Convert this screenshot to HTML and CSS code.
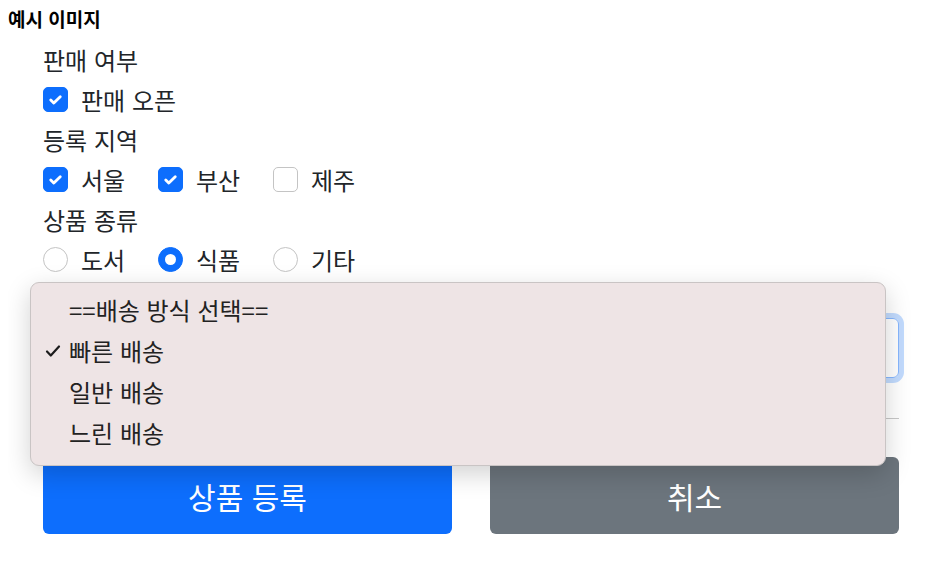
FILE: index.html
```html
<!DOCTYPE html>
<html lang="ko">
<head>
  <meta charset="UTF-8">
  <title>예시 이미지</title>
  <link rel="stylesheet" href="styles.css">
</head>
<body>

  <div class="title">예시 이미지</div>

  <form class="itemForm">
    <div class="row">
      <span class="formLabel">판매 여부</span>
    </div>
    <div class="row">
      <label class="check">
        <span class="box checked">
          <svg viewBox="0 0 20 20" width="19" height="19"><path d="M5 10.5l3.2 3.2L15 7" fill="none" stroke="#fff" stroke-width="3" stroke-linecap="round" stroke-linejoin="round"/></svg>
        </span>
        판매 오픈
      </label>
    </div>

    <div class="row">
      <span class="formLabel">등록 지역</span>
    </div>
    <div class="row">
      <label class="check">
        <span class="box checked">
          <svg viewBox="0 0 20 20" width="19" height="19"><path d="M5 10.5l3.2 3.2L15 7" fill="none" stroke="#fff" stroke-width="3" stroke-linecap="round" stroke-linejoin="round"/></svg>
        </span>
        서울
      </label>
      <label class="check">
        <span class="box checked">
          <svg viewBox="0 0 20 20" width="19" height="19"><path d="M5 10.5l3.2 3.2L15 7" fill="none" stroke="#fff" stroke-width="3" stroke-linecap="round" stroke-linejoin="round"/></svg>
        </span>
        부산
      </label>
      <label class="check">
        <span class="box"></span>
        제주
      </label>
    </div>

    <div class="row">
      <span class="formLabel">상품 종류</span>
    </div>
    <div class="row">
      <label class="check">
        <span class="box radio"></span>
        도서
      </label>
      <label class="check">
        <span class="box radio checked"><span class="dot"></span></span>
        식품
      </label>
      <label class="check">
        <span class="box radio"></span>
        기타
      </label>
    </div>

    <div class="selectWrap">
      <!-- select box; its value is hidden behind the open menu -->
      <div class="select"></div>

      <div class="dropMenu">
        <div class="option">==배송 방식 선택==</div>
        <div class="option">
          <svg class="tick" viewBox="0 0 16 16" width="16" height="16"><path d="M2 8.5l3.8 4L14 3.5" fill="none" stroke="#1c1c1c" stroke-width="2.2" stroke-linecap="round" stroke-linejoin="round"/></svg>
          빠른 배송
        </div>
        <div class="option">일반 배송</div>
        <div class="option">느린 배송</div>
      </div>
    </div>

    <hr class="divider">

    <div class="buttons">
      <button type="button" class="btn btnPrimary">상품 등록</button>
      <button type="button" class="btn btnSecondary">취소</button>
    </div>
  </form>

</body>
</html>
```

FILE: styles.css
```css
body {
  margin: 8px;
  font-family: "Noto Sans CJK KR", "Noto Sans", sans-serif;
  color: #212529;
  background: #fff;
}

.title {
  font-size: 19px;
  font-weight: bold;
  line-height: 22px;
  color: #000;
}

.itemForm {
  margin: 9px 0 0 35px;
  width: 856px;
}

.row {
  display: flex;
  align-items: center;
  height: 40px;
}

.formLabel {
  font-size: 24px;
}

.check {
  display: flex;
  align-items: center;
  gap: 13px;
  font-size: 24px;
  min-width: 115px;
  white-space: nowrap;
}

.box {
  width: 25px;
  height: 25px;
  box-sizing: border-box;
  border: 1px solid #c4c4c4;
  border-radius: 5px;
  background: #fff;
  display: flex;
  align-items: center;
  justify-content: center;
  flex-shrink: 0;
}

.box.checked {
  background: #0d6efd;
  border-color: #0d6efd;
}

.box.radio {
  border-radius: 50%;
}

.dot {
  width: 11px;
  height: 11px;
  border-radius: 50%;
  background: #fff;
}

.selectWrap {
  position: relative;
  margin-top: 39px;
}

.select {
  height: 60px;
  box-sizing: border-box;
  border: 1px solid #86b7fe;
  border-radius: 6px;
  box-shadow: 0 0 0 5px rgba(13, 110, 253, 0.25);
}

.dropMenu {
  position: absolute;
  top: -36px;
  left: -13px;
  width: 856px;
  box-sizing: border-box;
  padding: 6px 0 12px;
  background: #eee4e5;
  border: 1px solid #c9c4c4;
  border-radius: 9px;
  box-shadow: 0 8px 26px rgba(0, 0, 0, 0.18);
  z-index: 10;
}

.option {
  position: relative;
  height: 41px;
  line-height: 41px;
  padding-left: 38px;
  font-size: 24px;
  color: #222;
}

.tick {
  position: absolute;
  left: 14px;
  top: 13px;
}

.divider {
  margin: 40px 0 0;
  border: none;
  border-top: 1px solid #c8c8c8;
}

.buttons {
  display: grid;
  grid-template-columns: 1fr 1fr;
  gap: 38px;
  margin-top: 38px;
}

.btn {
  height: 77px;
  border: none;
  border-radius: 6px;
  color: #fff;
  font-family: inherit;
  font-size: 30px;
}

.btnPrimary {
  background: #0d6efd;
}

.btnSecondary {
  background: #6c757d;
}
```
